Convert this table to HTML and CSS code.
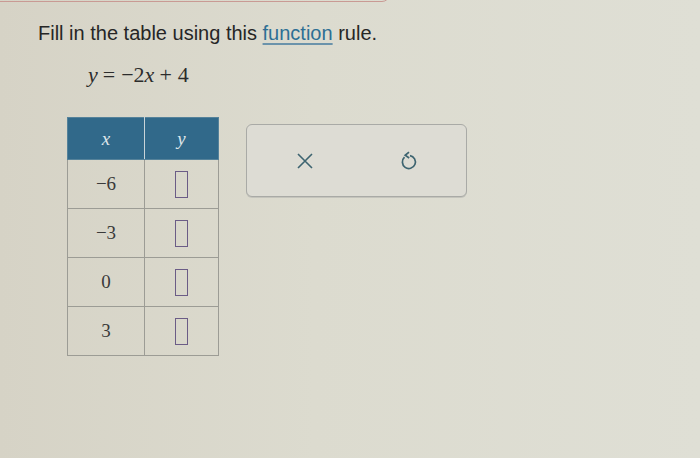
FILE: index.html
```html
<!DOCTYPE html>
<html>
<head>
<meta charset="utf-8">
<link rel="stylesheet" href="styles.css">
</head>
<body>
<div class="topbar"></div>
<div class="content">
  <p class="prompt">Fill in the table using this <span class="link">function</span> rule.</p>
  <div class="equation"><i>y</i><span class="op">=</span>−2<i>x</i><span class="op">+</span>4</div>
  <div class="work">
    <table class="grid">
      <thead>
        <tr><th><i>x</i></th><th><i>y</i></th></tr>
      </thead>
      <tbody>
        <tr><td>−6</td><td><span class="box"></span></td></tr>
        <tr><td>−3</td><td><span class="box"></span></td></tr>
        <tr><td>0</td><td><span class="box"></span></td></tr>
        <tr><td>3</td><td><span class="box"></span></td></tr>
      </tbody>
    </table>
    <div class="tools">
      <svg class="icon" width="18" height="18" viewBox="0 0 18 18"><path d="M2 2 L16 16 M16 2 L2 16" stroke="#3d6470" stroke-width="1.6" fill="none"/></svg>
      <svg class="icon" width="20" height="22" viewBox="0 0 20 22"><path d="M6.5 7.2 A6.5 6.5 0 1 0 12 5.6" stroke="#3d6470" stroke-width="1.7" fill="none"/><path d="M11 2.2 L7.2 5.3 L11.2 8" stroke="#3d6470" stroke-width="1.7" fill="none" stroke-linejoin="miter"/></svg>
    </div>
  </div>
</div>
</body>
</html>
```

FILE: styles.css
```css
html, body { margin: 0; padding: 0; }
body {
  width: 700px;
  height: 458px;
  overflow: hidden;
  background: linear-gradient(90deg, #d6d3c6 0%, #dcdbcf 45%, #dfdfd5 100%);
  font-family: "Liberation Sans", Arial, sans-serif;
  color: #2a2a2a;
  position: relative;
}
.topbar {
  position: absolute;
  left: -10px;
  top: -20px;
  width: 400px;
  height: 22px;
  border: 1.5px solid #c99a94;
  border-radius: 0 0 8px 0;
  box-sizing: border-box;
}
.content { padding: 21px 0 0 38px; }
.prompt {
  margin: 0;
  font-size: 20px;
  line-height: 25px;
  color: #262626;
}
.link {
  color: #2d6f94;
  text-decoration: underline;
  text-underline-offset: 3px;
  text-decoration-color: #6b93ab;
}
.equation {
  margin: 16px 0 0 50px;
  font-family: "Liberation Serif", "Times New Roman", serif;
  font-size: 22px;
  line-height: 26px;
  color: #2c2c2c;
}
.op { margin: 0 6px 0 5px; }
.work {
  display: flex;
  align-items: flex-start;
  gap: 27px;
  margin: 29px 0 0 29px;
}
.grid {
  border-collapse: collapse;
  font-family: "Liberation Serif", "Times New Roman", serif;
  font-size: 19px;
  color: #3a3a3a;
}
.grid th {
  background: #31698a;
  color: #dfe6ea;
  font-weight: normal;
  height: 41px;
  border: 1px solid #55829a;
  border-right-color: #c9d4d9;
  padding: 0;
}
.grid th:last-child { border-right-color: #55829a; }
.grid th:first-child { width: 76px; }
.grid th:last-child { width: 73px; }
.grid td {
  border: 1px solid #9c9c95;
  height: 48px;
  text-align: center;
  padding: 0;
}
.box {
  display: inline-block;
  width: 11px;
  height: 25px;
  border: 1.5px solid #6b5c86;
  vertical-align: middle;
}
.tools {
  margin-top: 7px;
  width: 221px;
  height: 73px;
  border: 1.5px solid #a9aaa6;
  border-radius: 6px;
  background: #dddcd4;
  display: flex;
  align-items: center;
  justify-content: space-between;
  padding: 0 48px 0 49px;
  box-sizing: border-box;
  box-shadow: 0 1px 0 #c4c4bc;
}
.icon { display: block; }
```
